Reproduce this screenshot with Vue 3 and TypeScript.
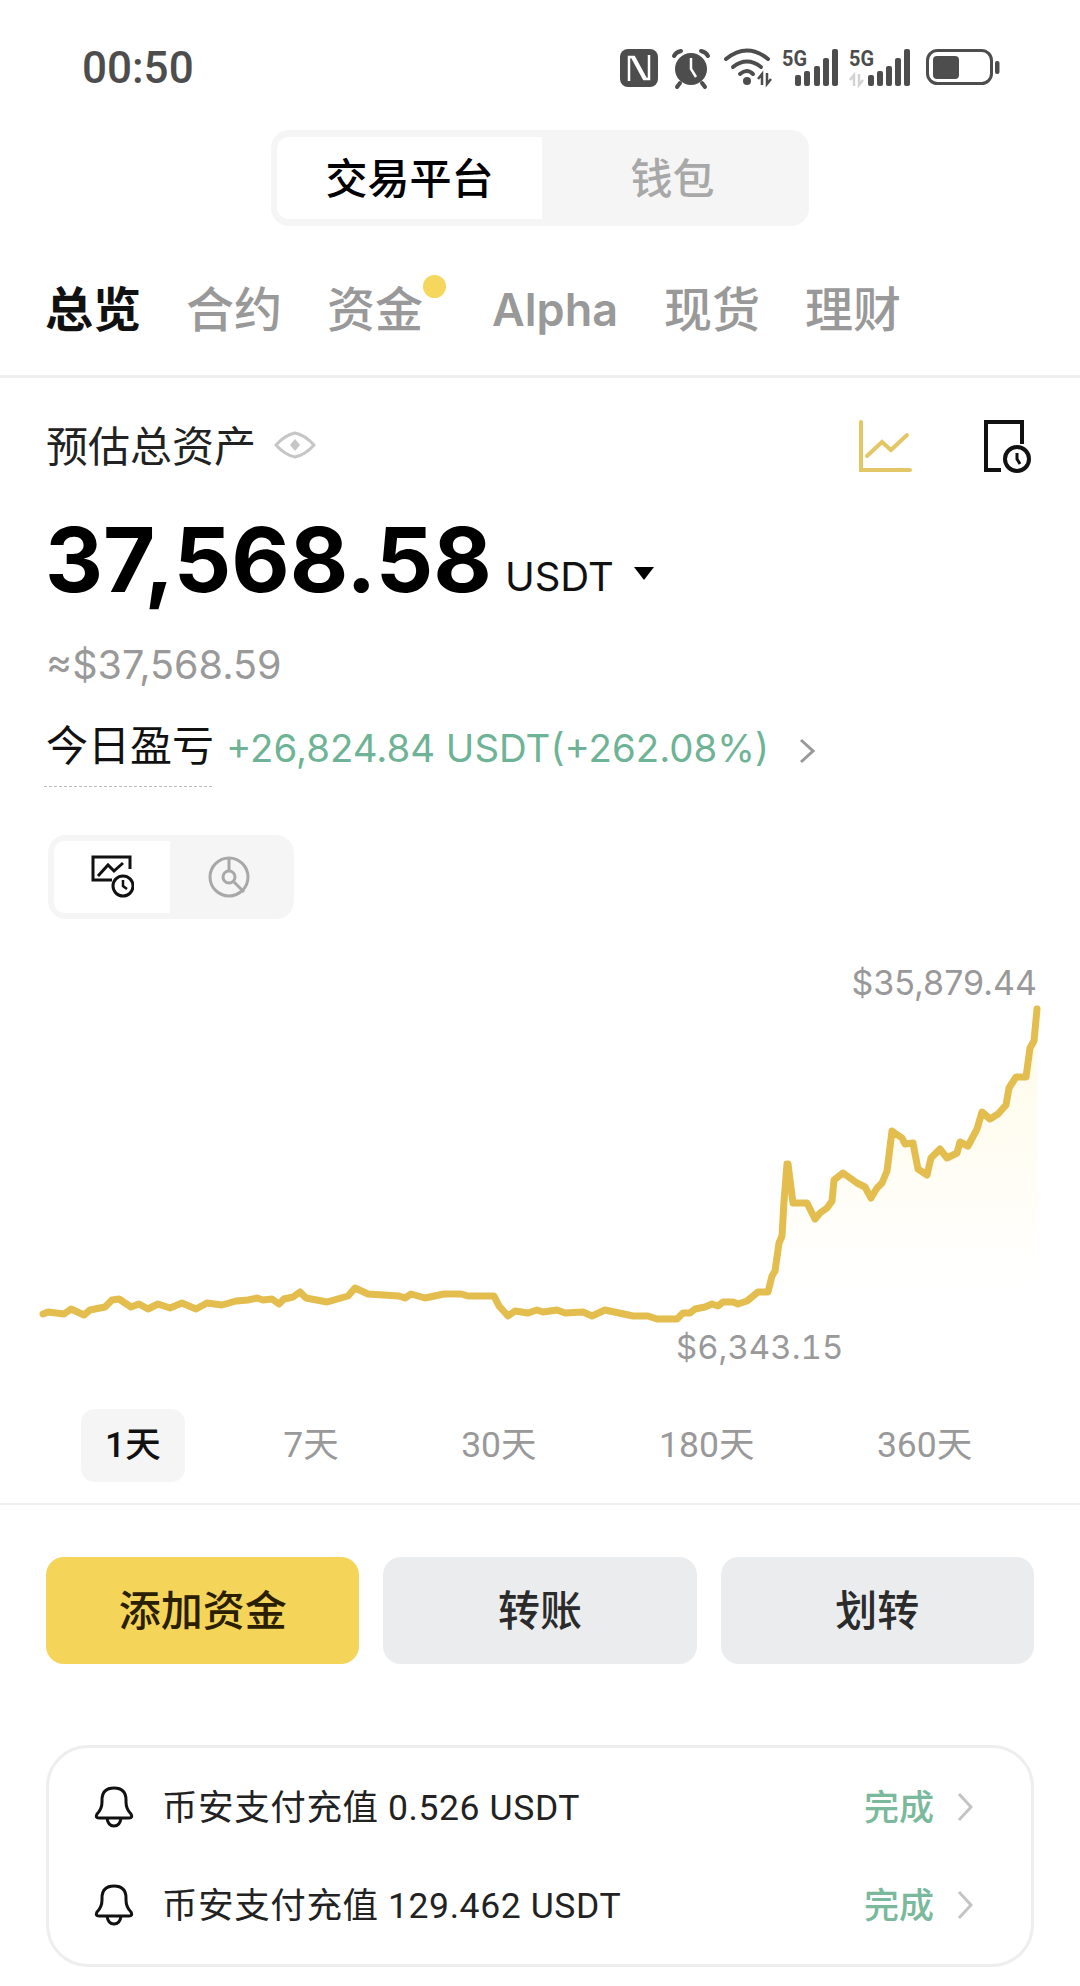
<script setup lang="ts">
import { computed } from 'vue'

const pts: [number, number][] = [
  [43,1313],[48,1311],[64,1313],[71,1308],[84,1314],[90,1309],[105,1306],[112,1299],[119,1298],[131,1306],[139,1303],[148,1308],[158,1303],[170,1307],[182,1302],[196,1308],[207,1302],[222,1304],[236,1300],[248,1299],[257,1297],[263,1299],[272,1298],[279,1303],[284,1298],[293,1296],[300,1291],[306,1297],[327,1301],[348,1295],[355,1287],[368,1293],[399,1295],[405,1297],[411,1293],[425,1297],[444,1293],[461,1293],[468,1295],[494,1295],[499,1305],[508,1315],[515,1310],[528,1312],[537,1309],[543,1311],[557,1309],[565,1312],[583,1311],[592,1315],[605,1309],[633,1315],[648,1315],[657,1318],[677,1318],[683,1312],[690,1312],[695,1308],[705,1306],[712,1303],[718,1305],[723,1301],[733,1301],[738,1303],[747,1300],[758,1291],[768,1291],[772,1275],[775,1270],[779,1242],[782,1235],[784,1200],[787,1163],[788,1163],[793,1202],[807,1202],[815,1218],[820,1212],[827,1207],[832,1200],[834,1179],[843,1172],[857,1182],[865,1186],[871,1197],[877,1187],[882,1182],[887,1170],[892,1130],[902,1137],[905,1143],[913,1142],[918,1168],[927,1174],[931,1157],[940,1148],[947,1157],[957,1152],[960,1141],[968,1145],[977,1128],[982,1111],[990,1118],[998,1113],[1006,1104],[1009,1087],[1016,1076],[1026,1076],[1030,1047],[1034,1040],[1037,1008]
]
const line = computed(() => 'M' + pts.map(p => p.join(',')).join(' L'))
const area = computed(() => line.value + ' L1037,1320 L43,1320 Z')

const tabs = ['总览', '合约', '资金', 'Alpha', '现货', '理财']
const ranges = ['1天', '7天', '30天', '180天', '360天']
const actions = ['添加资金', '转账', '划转']
const notices = ['币安支付充值 0.526 USDT', '币安支付充值 129.462 USDT']
</script>

<template>
  <div class="page">
    <div class="status">
      <span class="time">00:50</span>
      <svg class="status-icons" viewBox="620 46 380 44" width="380" height="44">
        <rect x="620" y="49" width="38" height="38" rx="8" fill="#4d4d4d" />
        <path d="M629 81V57h5L646 79M649 55V79h-5L632 57" fill="none" stroke="#fff" stroke-width="2.5" />
        <circle cx="691" cy="69" r="16" fill="#4d4d4d" />
        <path d="M691 58v11l5 8" fill="none" stroke="#fff" stroke-width="2.5" />
        <path d="M674 56q2-4 7-5M708 56q-2-4-7-5M680 83l-3 4M702 83l3 4" fill="none" stroke="#4d4d4d" stroke-width="4" stroke-linecap="round" />
        <g fill="none" stroke="#4d4d4d" stroke-width="4" stroke-linecap="round">
          <path d="M726 59q21-17 42 0" />
          <path d="M733 67q14-11 28 0" />
          <path d="M740 74q7-6 13 0" />
        </g>
        <circle cx="747" cy="81" r="4" fill="#4d4d4d" />
        <path d="M762 85V74l-4 5M767 73v11l4-5" fill="none" stroke="#4d4d4d" stroke-width="2.5" />
        <text x="782" y="66" class="g5" textLength="25" lengthAdjust="spacingAndGlyphs">5G</text>
        <g fill="#4d4d4d">
          <rect x="795" y="75" width="6" height="11" rx="2" />
          <rect x="804" y="71" width="6" height="15" rx="2" />
          <rect x="814" y="66" width="6" height="20" rx="2" />
          <rect x="823" y="58" width="6" height="28" rx="2" />
          <rect x="832" y="49" width="6" height="37" rx="2" />
        </g>
        <text x="849" y="66" class="g5" textLength="25" lengthAdjust="spacingAndGlyphs">5G</text>
        <path d="M854 86V75l-4 5M859 74v11l4-5" fill="none" stroke="#d2d2d2" stroke-width="2.5" />
        <g fill="#4d4d4d">
          <rect x="868" y="75" width="6" height="11" rx="2" />
          <rect x="877" y="71" width="6" height="15" rx="2" />
          <rect x="886" y="66" width="6" height="20" rx="2" />
          <rect x="895" y="58" width="6" height="28" rx="2" />
          <rect x="904" y="49" width="6" height="37" rx="2" />
        </g>
        <rect x="927.5" y="50.5" width="64" height="33" rx="10" fill="none" stroke="#4d4d4d" stroke-width="3" />
        <rect x="933" y="56" width="26" height="23" rx="4" fill="#4d4d4d" />
        <rect x="995" y="61" width="4.5" height="13" rx="2" fill="#4d4d4d" />
      </svg>
    </div>

    <div class="switch">
      <div class="switch-on">交易平台</div>
      <div class="switch-off">钱包</div>
    </div>

    <nav class="tabs">
      <span
        v-for="(t, i) in tabs"
        :key="t"
        class="tab"
        :class="{ active: i === 0, latin: t === 'Alpha', dotted: t === '资金' }"
      >{{ t }}</span>
    </nav>

    <section class="summary">
      <div class="head">
        <span class="head-label">预估总资产</span>
        <svg class="eye" viewBox="0 0 42 28" width="42" height="28">
          <path d="M2 14Q11 4 21 2Q31 4 40 14Q31 24 21 26Q11 24 2 14Z" fill="none" stroke="#c6c6c6" stroke-width="3" stroke-linejoin="round" />
          <path d="M21 8l5 6-5 6-5-6Z" fill="#c6c6c6" />
        </svg>
        <span class="spacer"></span>
        <svg class="chart-btn" viewBox="0 0 56 54" width="56" height="54">
          <path d="M3 2V50H52" fill="none" stroke="#e3c766" stroke-width="4" stroke-linecap="round" />
          <path d="M9 36L24 22L33 30L49 15" fill="none" stroke="#e3c766" stroke-width="4" stroke-linecap="round" />
        </svg>
        <svg class="doc-btn" viewBox="0 0 50 54" width="50" height="54">
          <path d="M17 50H2V2H38V24" fill="none" stroke="#111" stroke-width="4" />
          <circle cx="33" cy="39" r="12" fill="none" stroke="#111" stroke-width="4" />
          <path d="M33 33V39L36 44" fill="none" stroke="#111" stroke-width="3" />
        </svg>
      </div>

      <div class="balance">
        <span class="amount">37,568.58</span>
        <span class="unit">USDT</span>
        <span class="caret"></span>
      </div>

      <div class="approx">≈$37,568.59</div>

      <div class="pnl">
        <span class="pnl-label">今日盈亏</span>
        <span class="pnl-value">+26,824.84 USDT(+262.08%)</span>
        <svg class="pnl-arrow" viewBox="0 0 16 26" width="16" height="26">
          <path d="M2 2L14 13L2 24" fill="none" stroke="#999" stroke-width="3" />
        </svg>
      </div>

      <div class="view-switch">
        <div class="view-on">
          <svg viewBox="0 0 44 44" width="44" height="44">
            <path d="M22 25H3V2H40V14" fill="none" stroke="#111" stroke-width="3" />
            <path d="M8 21L18 10L24 16L33 8" fill="none" stroke="#111" stroke-width="3" />
            <circle cx="33" cy="31" r="10" fill="#fff" stroke="#111" stroke-width="3" />
            <path d="M33 25V31L37 34" fill="none" stroke="#111" stroke-width="2.5" />
          </svg>
        </div>
        <div class="view-off">
          <svg viewBox="0 0 44 44" width="44" height="44">
            <circle cx="22" cy="22" r="19" fill="none" stroke="#a8a8a8" stroke-width="3" />
            <circle cx="22" cy="22" r="6" fill="none" stroke="#a8a8a8" stroke-width="3" />
            <path d="M22 3V16M27 27L37 37" fill="none" stroke="#a8a8a8" stroke-width="3" />
          </svg>
        </div>
      </div>
    </section>

    <section class="chart">
      <span class="chart-max">$35,879.44</span>
      <span class="chart-min">$6,343.15</span>
      <svg viewBox="0 950 1080 450" width="1080" height="450" class="chart-svg">
        <defs>
          <linearGradient id="area-fill" gradientUnits="userSpaceOnUse" x1="0" y1="1008" x2="0" y2="1320">
            <stop offset="0" stop-color="#fffbea" />
            <stop offset="0.55" stop-color="#fffdf5" />
            <stop offset="0.9" stop-color="#ffffff" />
          </linearGradient>
        </defs>
        <path :d="area" fill="url(#area-fill)" />
        <path :d="line" fill="none" stroke="#e3bd4e" stroke-width="7" stroke-linejoin="round" stroke-linecap="round" />
      </svg>
    </section>

    <div class="ranges">
      <span v-for="(r, i) in ranges" :key="r" class="range" :class="{ active: i === 0 }">{{ r }}</span>
    </div>

    <div class="actions">
      <button v-for="(a, i) in actions" :key="a" class="action" :class="{ primary: i === 0 }">{{ a }}</button>
    </div>

    <div class="notices">
      <div v-for="n in notices" :key="n" class="notice">
        <svg viewBox="0 0 40 42" width="40" height="42">
          <path d="M3 28Q8 23 8 16V14Q8 2 20 2Q32 2 32 14V16Q32 23 37 28Q39 32 35 32H5Q1 32 3 28Z" fill="none" stroke="#111" stroke-width="3" stroke-linejoin="round" />
          <path d="M13 32Q14 40 20 40Q26 40 27 32" fill="none" stroke="#111" stroke-width="3" />
        </svg>
        <span class="notice-text">{{ n }}</span>
        <span class="notice-state">完成</span>
        <svg class="notice-arrow" viewBox="0 0 16 30" width="16" height="30">
          <path d="M2 2L14 15L2 28" fill="none" stroke="#c4c4c4" stroke-width="3" />
        </svg>
      </div>
    </div>
  </div>
</template>

<style>
html, body { background: #fff; }
</style>

<style scoped>
.page {
  width: 1080px;
  height: 1986px;
  overflow: hidden;
  background: #fff;
  font-family: Inter, "Noto Sans CJK SC", sans-serif;
  color: #111;
}
.status {
  height: 130px;
  padding: 6px 80px 0 82px;
  box-sizing: border-box;
  display: flex;
  align-items: center;
  justify-content: space-between;
}
.time {
  font-family: Roboto, sans-serif;
  font-weight: 500;
  font-size: 44px;
  color: #4d4d4d;
}
.g5 {
  font-family: Roboto, sans-serif;
  font-weight: 700;
  font-size: 22px;
  fill: #4d4d4d;
}
.switch {
  width: 538px;
  height: 96px;
  margin-left: 271px;
  padding: 7px 6px;
  box-sizing: border-box;
  background: #f5f5f5;
  border-radius: 18px;
  display: flex;
}
.switch-on, .switch-off {
  display: flex;
  align-items: center;
  justify-content: center;
  padding-bottom: 5px;
  box-sizing: border-box;
  font-size: 42px;
  font-weight: 500;
}
.switch-on {
  width: 265px;
  background: #fff;
  border-radius: 12px 0 0 12px;
  color: #000;
}
.switch-off {
  flex: 1;
  color: #a8a8a8;
}
.tabs {
  height: 152px;
  padding: 18px 0 0 45px;
  box-sizing: border-box;
  border-bottom: 3px solid #eeeeee;
  display: flex;
  align-items: center;
  gap: 45px;
}
.tab {
  font-size: 48px;
  font-weight: 500;
  color: #999;
  position: relative;
  line-height: 60px;
}
.tab.active {
  color: #111;
  font-weight: 700;
}
.tab.latin {
  font-size: 45px;
  font-weight: 600;
  margin-left: 24px;
  margin-right: 1px;
}
.tab.dotted::after {
  content: "";
  position: absolute;
  left: 96px;
  top: -5px;
  width: 23px;
  height: 23px;
  border-radius: 50%;
  background: #f5d75e;
}
.summary {
  padding: 0 46px;
}
.head {
  margin-top: 36px;
  height: 58px;
  display: flex;
  align-items: center;
}
.head-label {
  font-size: 42px;
  color: #222;
}
.eye {
  margin-left: 18px;
  margin-top: 3px;
}
.spacer {
  flex: 1;
}
.chart-btn {
  margin-top: 8px;
}
.doc-btn {
  margin-left: 70px;
  margin-top: 8px;
}
.balance {
  margin-top: 38px;
  height: 100px;
  display: flex;
  align-items: center;
  line-height: 100px;
}
.amount {
  margin-left: -1px;
  font-size: 90px;
  font-weight: 700;
  color: #000;
}
.unit {
  margin-left: 13px;
  margin-top: 33px;
  font-size: 40px;
  color: #111;
}
.caret {
  margin-left: 20px;
  margin-top: 26px;
  width: 0;
  height: 0;
  border-left: 10px solid transparent;
  border-right: 10px solid transparent;
  border-top: 13px solid #000;
}
.approx {
  margin-top: 30px;
  height: 50px;
  line-height: 50px;
  font-size: 39.5px;
  color: #999;
}
.pnl {
  margin-top: 33px;
  height: 50px;
  display: flex;
  align-items: center;
}
.pnl-label {
  font-size: 42px;
  color: #111;
  height: 50px;
  line-height: 46px;
  position: relative;
}
.pnl-label::after {
  content: "";
  position: absolute;
  left: -2px;
  right: 2px;
  top: 63px;
  border-bottom: 1.5px dashed #bbb;
}
.pnl-value {
  margin-left: 12px;
  font-size: 38.4px;
  color: #6fb396;
  white-space: nowrap;
}
.pnl-arrow {
  margin-left: 30px;
  margin-top: 6px;
}
.view-switch {
  margin-top: 62px;
  margin-left: 2px;
  width: 246px;
  height: 84px;
  padding: 6px;
  box-sizing: border-box;
  background: #f5f5f5;
  border-radius: 18px;
  display: flex;
}
.view-on, .view-off {
  display: flex;
  align-items: center;
  justify-content: center;
}
.view-on {
  width: 116px;
  background: #fff;
  border-radius: 10px 0 0 10px;
}
.view-off {
  flex: 1;
}
.chart {
  position: relative;
  margin-top: 32px;
  height: 450px;
}
.chart-svg {
  display: block;
}
.chart-max, .chart-min {
  position: absolute;
  color: #999;
  line-height: 40px;
  white-space: nowrap;
}
.chart-max {
  right: 43px;
  top: 12px;
  font-size: 34px;
}
.chart-min {
  left: 676px;
  top: 376px;
  font-size: 33px;
  font-variant-numeric: tabular-nums;
}
.ranges {
  margin-top: 8px;
  height: 96px;
  padding: 0 0 22px 81px;
  box-sizing: border-box;
  border-bottom: 2px solid #eeeeee;
  display: flex;
  gap: 74.5px;
}
.range {
  padding: 0 24px;
  height: 73px;
  line-height: 73px;
  font-family: Roboto, "Noto Sans CJK SC", sans-serif;
  font-size: 35.5px;
  color: #999;
  border-radius: 14px;
}
.range.active {
  background: #f5f5f5;
  color: #111;
  font-weight: 500;
}
.actions {
  margin-top: 52px;
  padding: 0 46px;
  display: flex;
  gap: 24px;
}
.action {
  flex: 1;
  height: 107px;
  padding: 0 0 6px;
  border: none;
  border-radius: 18px;
  background: #eaecee;
  color: #2b2b2b;
  font-family: inherit;
  font-size: 42px;
  font-weight: 500;
}
.action.primary {
  background: #f4d55a;
  color: #2a2000;
}
.notices {
  margin: 81px 46px 0 46px;
  height: 222px;
  padding: 0 58px 0 45px;
  box-sizing: border-box;
  border: 3px solid #eeeeee;
  border-radius: 42px;
  display: flex;
  flex-direction: column;
  justify-content: center;
}
.notice {
  height: 98px;
  display: flex;
  align-items: center;
}
.notice-text {
  margin-left: 28px;
  margin-bottom: 6px;
  font-family: Roboto, "Noto Sans CJK SC", sans-serif;
  font-size: 35.5px;
  letter-spacing: 0.6px;
  color: #222;
  flex: 1;
}
.notice-state {
  margin-bottom: 6px;
  font-size: 35px;
  font-weight: 500;
  color: #7ab99b;
}
.notice-arrow {
  margin-left: 23px;
}
</style>
